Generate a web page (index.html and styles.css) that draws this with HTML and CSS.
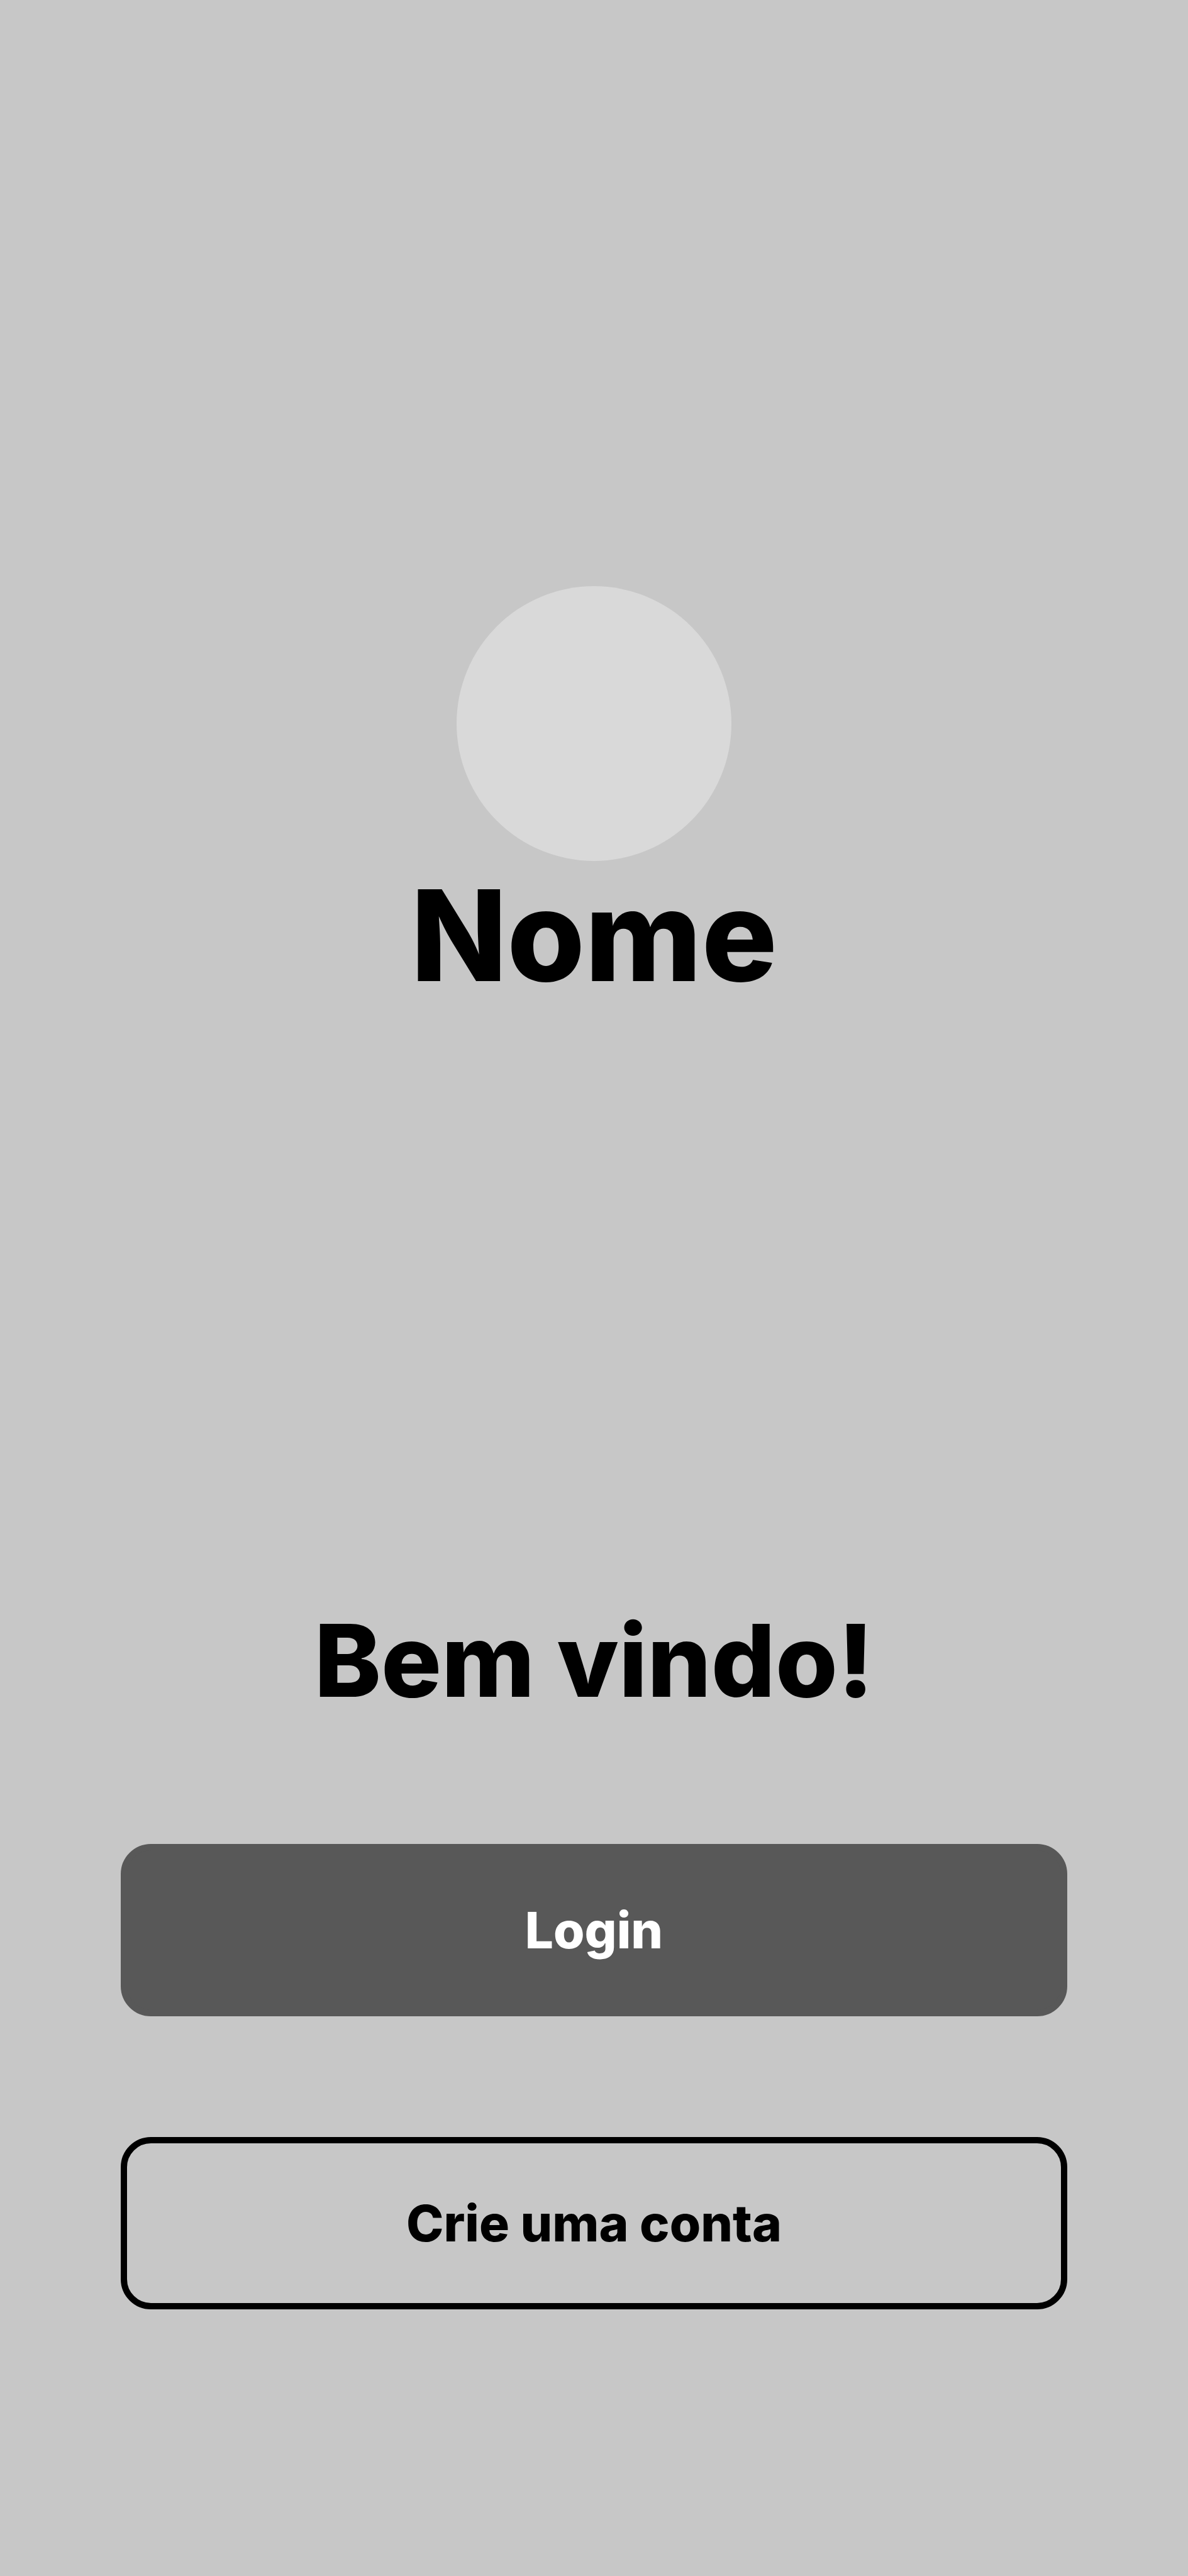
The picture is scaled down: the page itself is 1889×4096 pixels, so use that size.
FILE: index.html
```html
<!DOCTYPE html>
<html lang="pt-BR">
<head>
<meta charset="utf-8">
<meta name="viewport" content="width=device-width, initial-scale=1">
<title>Bem vindo!</title>
<link rel="stylesheet" href="styles.css">
</head>
<body>
<main class="welcome">
  <header class="brand">
    <div class="brand-logo"></div>
    <h1 class="brand-name">Nome</h1>
  </header>
  <section class="entry">
    <h2 class="greeting">Bem vindo!</h2>
    <div class="actions">
      <button class="button button-primary" type="button">Login</button>
      <button class="button button-outline" type="button">Crie uma conta</button>
    </div>
  </section>
</main>
</body>
</html>
```
FILE: styles.css
```css
* {
  box-sizing: border-box;
}

body {
  margin: 0;
  background: #c7c7c7;
  color: #000;
  font-family: Inter, "Liberation Sans", sans-serif;
}

.welcome {
  display: flex;
  flex-direction: column;
  justify-content: space-between;
  min-height: 100vh;
  padding: 932px 192px 424px;
}

.brand {
  display: flex;
  flex-direction: column;
  align-items: center;
  gap: 18px;
}

.brand-logo {
  width: 437px;
  height: 437px;
  border-radius: 50%;
  background: #d9d9d9;
}

.brand-name {
  margin: 0;
  font-size: 200px;
  line-height: 200px;
  font-weight: 800;
}

.entry {
  display: flex;
  flex-direction: column;
  gap: 212px;
}

.greeting {
  margin: 0;
  font-size: 160px;
  line-height: 160px;
  font-weight: 800;
  text-align: center;
}

.actions {
  display: flex;
  flex-direction: column;
  gap: 192px;
}

.button {
  width: 100%;
  height: 274px;
  padding: 0;
  border: 10px solid #000;
  border-radius: 48px;
  background: transparent;
  color: #000;
  font-family: inherit;
  font-size: 80px;
  line-height: 80px;
  font-weight: 800;
  text-align: center;
}

.button-primary {
  border-color: #585858;
  background: #585858;
  color: #fff;
}
```
